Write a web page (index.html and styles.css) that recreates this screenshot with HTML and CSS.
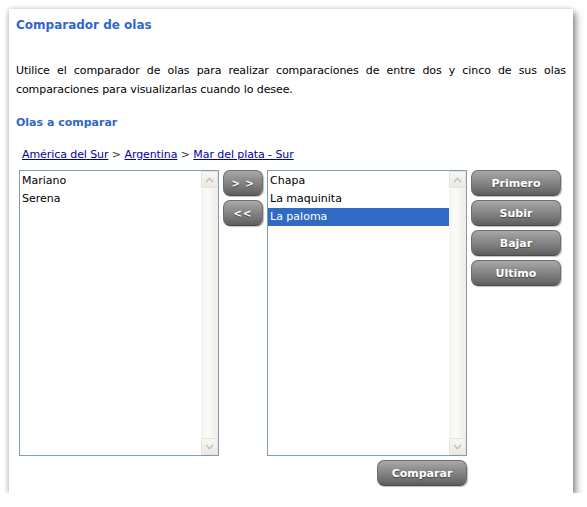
FILE: index.html
```html
<!DOCTYPE html>
<html lang="es">
<head>
<meta charset="utf-8">
<title>Comparador de olas</title>
<link rel="stylesheet" href="styles.css">
</head>
<body>
<div class="card">
  <h1 class="title">Comparador de olas</h1>
  <p class="intro">Utilice el comparador de olas para realizar comparaciones de entre dos y cinco de sus olas comparaciones para visualizarlas cuando lo desee.</p>
  <h2 class="subtitle">Olas a comparar</h2>
  <div class="crumbs"><a href="#">América del Sur</a> &gt; <a href="#">Argentina</a> &gt; <a href="#">Mar del plata - Sur</a></div>
  <div class="picker">
    <div class="listbox">
      <ul class="items">
        <li>Mariano</li>
        <li>Serena</li>
      </ul>
      <div class="scroll"><span class="sbtn up"><svg width="9" height="6" viewBox="0 0 9 6"><path d="M1 5 L4.5 1.5 L8 5" fill="none" stroke="#c3c2bb" stroke-width="1.6"/></svg></span><span class="sbtn down"><svg width="9" height="6" viewBox="0 0 9 6"><path d="M1 1 L4.5 4.5 L8 1" fill="none" stroke="#c3c2bb" stroke-width="1.6"/></svg></span></div>
    </div>
    <div class="movecol">
      <button class="gbtn small">&gt; &gt;</button>
      <button class="gbtn small">&lt;&lt;</button>
    </div>
    <div class="listbox">
      <ul class="items">
        <li>Chapa</li>
        <li>La maquinita</li>
        <li class="sel">La paloma</li>
      </ul>
      <div class="scroll"><span class="sbtn up"><svg width="9" height="6" viewBox="0 0 9 6"><path d="M1 5 L4.5 1.5 L8 5" fill="none" stroke="#c3c2bb" stroke-width="1.6"/></svg></span><span class="sbtn down"><svg width="9" height="6" viewBox="0 0 9 6"><path d="M1 1 L4.5 4.5 L8 1" fill="none" stroke="#c3c2bb" stroke-width="1.6"/></svg></span></div>
    </div>
    <div class="ordercol">
      <button class="gbtn">Primero</button>
      <button class="gbtn">Subir</button>
      <button class="gbtn">Bajar</button>
      <button class="gbtn">Ultimo</button>
    </div>
  </div>
  <div class="actions">
    <button class="gbtn">Comparar</button>
  </div>
</div>
</body>
</html>
```
FILE: styles.css
```css
html, body {
  margin: 0;
  padding: 0;
  background: #ffffff;
}
body {
  padding: 9px 0 0 9px;
  font-family: "DejaVu Sans", Verdana, sans-serif;
  font-size: 11px;
  color: #000;
}
.card {
  box-sizing: border-box;
  width: 564px;
  height: 484px;
  background: #fff;
  box-shadow: 3px 4px 7px rgba(0,0,0,0.45), -1px 0 5px rgba(0,0,0,0.18);
  padding: 6px 7px 0 7px;
}
.title {
  margin: 0;
  font-size: 12px;
  line-height: 21px;
  font-weight: bold;
  color: #3366cc;
}
.intro {
  margin: 25px 0 0 0;
  line-height: 19px;
  text-align: justify;
  letter-spacing: -0.08px;
}
.subtitle {
  margin: 14px 0 0 0;
  font-size: 11px;
  line-height: 19px;
  font-weight: bold;
  color: #3366cc;
}
.crumbs {
  margin: 14px 0 0 6px;
  line-height: 18px;
  color: #333;
  letter-spacing: -0.08px;
}
.crumbs a {
  color: #0000aa;
  text-decoration: underline;
}
.picker {
  margin: 6px 0 0 3px;
  display: flex;
  gap: 4px;
  align-items: flex-start;
}
.listbox {
  box-sizing: border-box;
  width: 200px;
  height: 286px;
  border: 1px solid #7f9db9;
  display: flex;
  background: #fff;
}
.items {
  flex: 1;
  list-style: none;
  margin: 0;
  padding: 1px 0 0 0;
}
.items li {
  height: 18px;
  line-height: 18px;
  padding-left: 2px;
}
.items li.sel {
  background: #316ac5;
  color: #fff;
}
.scroll {
  width: 17px;
  display: flex;
  flex-direction: column;
  justify-content: space-between;
  background: linear-gradient(to right, #f5f4ef, #fbfbf8 40%, #eeede6);
}
.sbtn {
  box-sizing: border-box;
  height: 17px;
  border: 1px solid #e5e4dc;
  border-radius: 2px;
  background: linear-gradient(#f7f7f3, #ebeae3);
  display: flex;
  align-items: center;
  justify-content: center;
}
.movecol, .ordercol {
  display: flex;
  flex-direction: column;
  gap: 4px;
}
.gbtn {
  box-sizing: border-box;
  width: 90px;
  height: 26px;
  padding: 0;
  border: 1px solid #6e6e6e;
  border-bottom-color: #4a4a4a;
  border-radius: 7px;
  background: linear-gradient(to bottom, #a9a9a9 0%, #8e8e8e 35%, #7a7a7a 65%, #5e5e5e 100%);
  color: #fff;
  font-family: "DejaVu Sans", Verdana, sans-serif;
  font-weight: bold;
  font-size: 11px;
  text-shadow: 0 1px 1px #444;
  box-shadow: 1px 1px 1px rgba(0,0,0,0.25);
}
.gbtn.small {
  width: 40px;
  font-size: 10px;
  letter-spacing: 1px;
}
.actions {
  width: 451px;
  display: flex;
  justify-content: flex-end;
  margin-top: 4px;
}
```
